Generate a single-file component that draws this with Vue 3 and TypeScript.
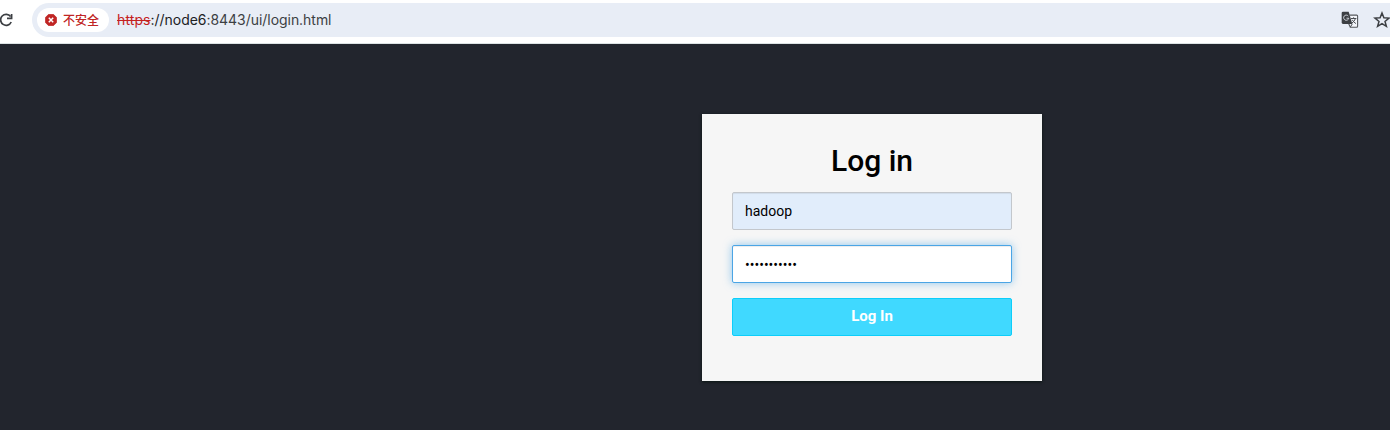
<script setup lang="ts">
import { ref } from 'vue'

const username = ref<string>('hadoop')
const password = ref<string>('hadoop12345')
</script>

<template>
  <div class="window">
    <header class="toolbar">
      <svg class="reload" width="18" height="18" viewBox="0 0 18 18" aria-hidden="true">
        <path d="M13.6 5.6A5.5 5.5 0 1 0 14.2 11" />
        <path d="M14.6 2.9V7.3H10" />
      </svg>
      <div class="address">
        <div class="security">
          <svg width="12" height="12" viewBox="0 0 12 12" aria-hidden="true">
            <path d="M3.6 .3H8.4L11.7 3.6V8.4L8.4 11.7H3.6L.3 8.4V3.6Z" fill="#c02524" stroke="#c02524" stroke-linejoin="round" stroke-width=".6" />
            <path d="M3.8 3.8L8.2 8.2M8.2 3.8L3.8 8.2" stroke="#fff" stroke-width="1.5" />
          </svg>
          <span>不安全</span>
        </div>
        <div class="url"><span class="scheme">https</span><span class="host">://node6</span><span class="path">:8443/ui/login.html</span></div>
        <svg class="translate" width="18" height="18" viewBox="0 0 18 18" aria-hidden="true">
          <path d="M8.5 4.1H15.6Q16.6 4.1 16.6 5.1V15.3Q16.6 16.3 15.6 16.3H9.3L7.7 12.8" fill="#f3f5fa" stroke="#55585c" stroke-width="1.1" />
          <path d="M2 .8H7.7L11.3 12.9H2Q.7 12.9 .7 11.6V2.1Q.7 .8 2 .8Z" fill="#3c3f43" />
          <path d="M7.3 5.1A2.6 2.6 0 1 0 7.8 7.2H5.5" fill="none" stroke="#cfd3da" stroke-width="1" />
          <path d="M10 7.5H15.4M12.6 6.3V7.5M14.5 7.5Q13.8 10 10.8 12.2M11.2 8.8Q12.5 11 14.9 12.6M9.3 16.1L11.3 12.9" fill="none" stroke="#4a4d51" stroke-width="1" />
        </svg>
        <svg class="star" width="18" height="18" viewBox="0 0 18 18" aria-hidden="true">
          <path d="M9 2L10.9 6.8L16 7.1L12 10.4L13.4 15.4L9 12.6L4.6 15.4L6 10.4L2 7.1L7.1 6.8Z" />
        </svg>
      </div>
    </header>
    <main class="page">
      <form class="login" @submit.prevent>
        <h1>Log in</h1>
        <input v-model="username" class="field filled" type="text" aria-label="Username" />
        <input v-model="password" class="field active" type="password" aria-label="Password" />
        <button type="submit">Log In</button>
      </form>
    </main>
  </div>
</template>

<style>
body {
  margin: 0;
}
</style>

<style scoped>
.window {
  width: 100%;
  height: 430px;
  overflow: hidden;
  background: #22252d;
  font-family: Roboto, "Liberation Sans", sans-serif;
}

.window * {
  box-sizing: border-box;
}

.toolbar {
  display: flex;
  width: 1744px;
  height: 44px;
  padding-top: 3px;
  background: #fff;
  border-bottom: 1px solid #dce3e4;
}

.reload {
  flex: none;
  margin: 8px 17px 0 -3px;
  fill: none;
  stroke: #3c3f43;
  stroke-width: 1.7;
}

.address {
  display: flex;
  flex: 1;
  align-items: center;
  height: 34px;
  padding-left: 5px;
  background: #e8edf6;
  border-radius: 17px 0 0 17px;
}

.security {
  display: flex;
  align-items: center;
  width: 72px;
  height: 24px;
  padding-left: 8px;
  gap: 6px;
  background: #fff;
  border-radius: 12px;
  color: #c02524;
  font: 500 12px/24px "Noto Sans CJK SC", sans-serif;
}

.security span {
  white-space: nowrap;
}

.url {
  width: 1224px;
  margin-left: 8px;
  color: #3c3f43;
  font: 14px/20px Inter, sans-serif;
  letter-spacing: -0.04px;
  white-space: nowrap;
}

.scheme {
  color: #c5221f;
  letter-spacing: 0.1px;
  text-decoration: line-through;
}

.host {
  color: #202124;
}

.star {
  margin-left: 14px;
  fill: none;
  stroke: #3c3f43;
  stroke-width: 1.5;
}

.page {
  display: flex;
  justify-content: center;
  width: 1744px;
  height: 386px;
  padding-top: 70px;
}

.login {
  display: flex;
  flex-direction: column;
  width: 340px;
  height: 267px;
  padding: 30px;
  background: #f6f6f6;
  box-shadow: 0 1px 3px #0b1513;
}

h1 {
  height: 33px;
  margin: 0 0 15px;
  color: #000;
  font-size: 30px;
  font-weight: 500;
  line-height: 33px;
  text-align: center;
}

.field {
  width: 280px;
  height: 38px;
  margin: 0 0 15px;
  padding: 0 12px;
  border: 1px solid #c3c7cc;
  border-radius: 2px;
  outline: none;
  color: #000;
  font: 14px/20px Roboto, sans-serif;
}

.filled {
  background: #e1edfb;
  box-shadow: inset 0 1px 1px rgba(0, 0, 0, 0.075);
}

.active {
  padding-top: 1px;
  background: #fff;
  border-color: #4ba5e5;
  box-shadow: inset 0 1px 1px rgba(0, 0, 0, 0.075), 0 0 8px rgba(75, 165, 229, 0.6);
}

button {
  width: 280px;
  height: 38px;
  padding: 0 0 2px;
  background: #40d9ff;
  border: 1px solid #0dcefa;
  border-radius: 2px;
  color: #fff;
  font: 700 15px/20px Roboto, sans-serif;
}
</style>
